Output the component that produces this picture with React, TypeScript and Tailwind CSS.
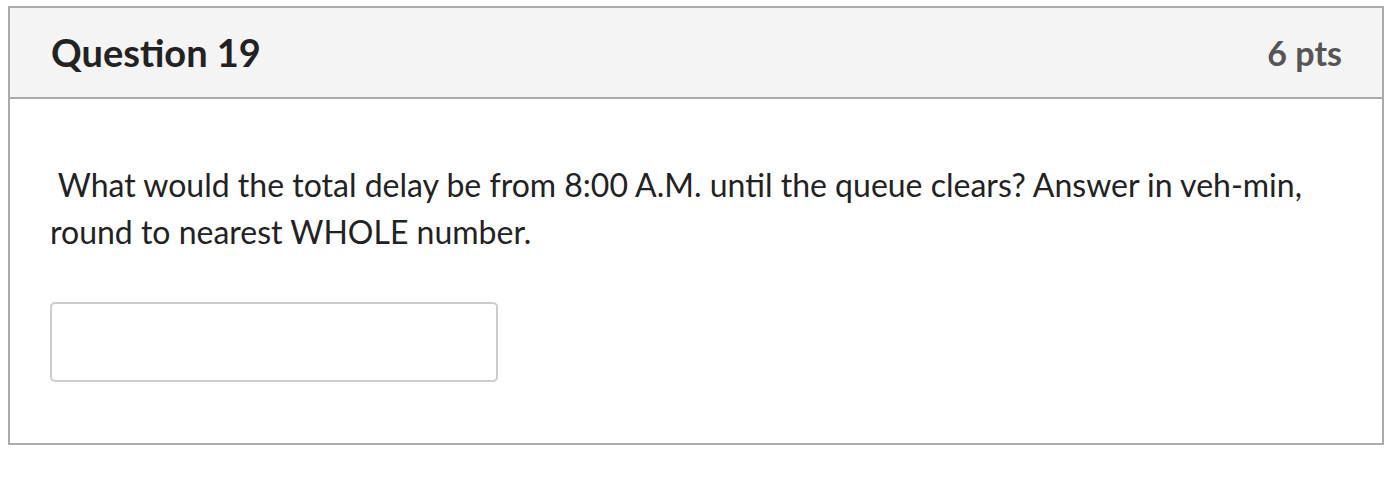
export default function App() {
  return (
    <div className="bg-white pt-[6px] pl-[8px] pr-[4px] font-['Lato',sans-serif]" style={{ width: 1388, height: 504 }}>
      <div className="border-2 border-[#ababab]">
        <div className="flex h-[91px] items-center justify-between border-b-2 border-[#ababab] bg-[#f4f4f4] pl-[41px] pr-[40px]">
          <h2 className="text-[38px] font-bold text-[#222]">Question 19</h2>
          <div className="text-[34px] font-bold text-[#555]">6 pts</div>
        </div>
        <div className="px-[40px] pt-[62px] pb-[61px]">
          <p className="text-[32px] leading-[47px] text-[#222]">
            &nbsp;What would the total delay be from 8:00 A.M. until the queue clears? Answer in veh-min, round to nearest WHOLE number.
          </p>
          <input
            type="text"
            className="mt-[47px] block h-[80px] w-[448px] rounded-[5px] border-2 border-[#cccccc] bg-white"
          />
        </div>
      </div>
    </div>
  )
}
